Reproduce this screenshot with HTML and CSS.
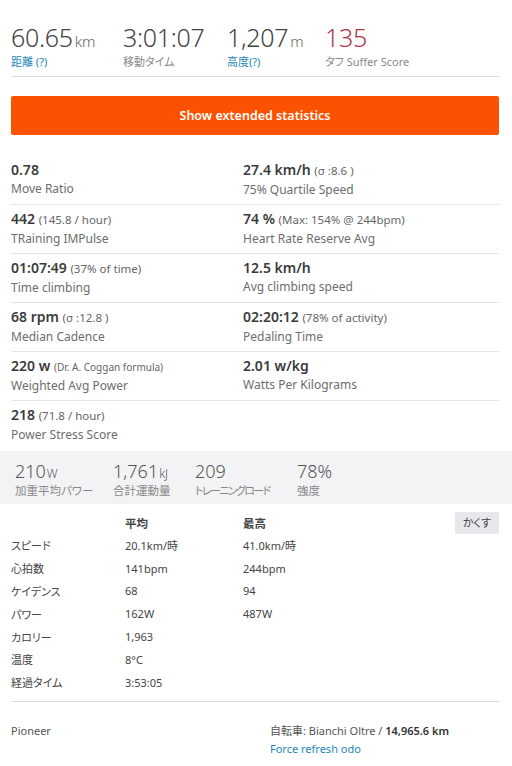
FILE: index.html
```html
<!DOCTYPE html>
<html lang="ja">
<head>
    <meta charset="UTF-8">
    <meta name="viewport" content="width=device-width, initial-scale=1.0">
    <title>Activity</title>
    <link rel="stylesheet" href="styles.css">
</head>
<body>
    <div class="page">
        <ul class="summary">
            <li class="summary-item">
                <div class="big">60.65<span class="unit">km</span></div>
                <div class="small link">距離 (?)</div>
            </li>
            <li class="summary-item">
                <div class="big">3:01:07</div>
                <div class="small">移動タイム</div>
            </li>
            <li class="summary-item">
                <div class="big">1,207<span class="unit">m</span></div>
                <div class="small link">高度(?)</div>
            </li>
            <li class="summary-item">
                <div class="big suffer">135</div>
                <div class="small">タフ Suffer Score</div>
            </li>
        </ul>

        <button class="extended-btn">Show extended statistics</button>

        <div class="ext-grid">
            <div class="ext-cell">
                <div class="ext-value">0.78</div>
                <div class="ext-label">Move Ratio</div>
            </div>
            <div class="ext-cell">
                <div class="ext-value">27.4 km/h <span class="ext-note">(σ :8.6 )</span></div>
                <div class="ext-label">75% Quartile Speed</div>
            </div>
            <div class="ext-cell">
                <div class="ext-value">442 <span class="ext-note">(145.8 / hour)</span></div>
                <div class="ext-label">TRaining IMPulse</div>
            </div>
            <div class="ext-cell">
                <div class="ext-value">74 % <span class="ext-note">(Max: 154% @ 244bpm)</span></div>
                <div class="ext-label">Heart Rate Reserve Avg</div>
            </div>
            <div class="ext-cell">
                <div class="ext-value">01:07:49 <span class="ext-note">(37% of time)</span></div>
                <div class="ext-label">Time climbing</div>
            </div>
            <div class="ext-cell">
                <div class="ext-value">12.5 km/h</div>
                <div class="ext-label">Avg climbing speed</div>
            </div>
            <div class="ext-cell">
                <div class="ext-value">68 rpm <span class="ext-note">(σ :12.8 )</span></div>
                <div class="ext-label">Median Cadence</div>
            </div>
            <div class="ext-cell">
                <div class="ext-value">02:20:12 <span class="ext-note">(78% of activity)</span></div>
                <div class="ext-label">Pedaling Time</div>
            </div>
            <div class="ext-cell">
                <div class="ext-value">220 w <span class="ext-note tiny">(Dr. A. Coggan formula)</span></div>
                <div class="ext-label">Weighted Avg Power</div>
            </div>
            <div class="ext-cell">
                <div class="ext-value">2.01 w/kg</div>
                <div class="ext-label">Watts Per Kilograms</div>
            </div>
            <div class="ext-cell last">
                <div class="ext-value">218 <span class="ext-note">(71.8 / hour)</span></div>
                <div class="ext-label">Power Stress Score</div>
            </div>
        </div>

        <ul class="secondary">
            <li>
                <div class="sec-value">210<span class="unit">W</span></div>
                <div class="sec-label">加重平均パワー</div>
            </li>
            <li>
                <div class="sec-value">1,761<span class="unit">kJ</span></div>
                <div class="sec-label">合計運動量</div>
            </li>
            <li>
                <div class="sec-value">209</div>
                <div class="sec-label narrow">トレーニングロード</div>
            </li>
            <li>
                <div class="sec-value">78%</div>
                <div class="sec-label">強度</div>
            </li>
        </ul>

        <div class="more-stats">
            <table class="avg-max">
                <thead>
                    <tr>
                        <th></th>
                        <th>平均</th>
                        <th>最高</th>
                        <th class="hide-col"><button class="hide-btn">かくす</button></th>
                    </tr>
                </thead>
                <tbody>
                    <tr><td>スピード</td><td>20.1km/時</td><td>41.0km/時</td><td></td></tr>
                    <tr><td>心拍数</td><td>141bpm</td><td>244bpm</td><td></td></tr>
                    <tr><td>ケイデンス</td><td>68</td><td>94</td><td></td></tr>
                    <tr><td>パワー</td><td>162W</td><td>487W</td><td></td></tr>
                    <tr><td>カロリー</td><td>1,963</td><td></td><td></td></tr>
                    <tr><td>温度</td><td>8°C</td><td></td><td></td></tr>
                    <tr><td>経過タイム</td><td>3:53:05</td><td></td><td></td></tr>
                </tbody>
            </table>
        </div>

        <div class="device">
            <div class="device-name">Pioneer</div>
            <div class="gear">
                <div>自転車: Bianchi Oltre / <strong>14,965.6 km</strong></div>
                <a class="refresh" href="#">Force refresh odo</a>
            </div>
        </div>
    </div>
</body>
</html>
```

FILE: styles.css
```css
body {
    margin: 0;
    background-color: #fff;
    font-family: "Noto Sans", "Noto Sans CJK JP", sans-serif;
    font-feature-settings: "palt";
    color: #333;
}

.page {
    padding: 0 13px 0 11px;
}

ul {
    list-style: none;
    margin: 0;
    padding: 0;
}

/* top summary */
.summary {
    display: flex;
    height: 54px;
    padding-top: 22px;
    border-bottom: 1px solid #ddd;
}

.summary-item:nth-child(1) { width: 112px; }
.summary-item:nth-child(2) { width: 104px; }
.summary-item:nth-child(3) { width: 98px; }

.big {
    height: 30px;
    font-size: 25px;
    font-weight: 300;
    line-height: 30px;
    color: #444;
    letter-spacing: -0.3px;
}

.big .unit {
    font-size: 15px;
    margin-left: 2px;
    color: #666;
    letter-spacing: 0;
}

.big.suffer {
    color: #b0374a;
}

.small {
    height: 14px;
    margin-top: 3px;
    font-size: 11px;
    line-height: 14px;
    color: #888;
}

.small.link {
    color: #1e88b4;
}

/* orange button */
.extended-btn {
    display: block;
    width: 100%;
    height: 39px;
    margin-top: 19px;
    border: none;
    border-radius: 2px;
    background-color: #fc5200;
    color: #fff;
    font-family: inherit;
    font-size: 12.5px;
    font-weight: 600;
    cursor: pointer;
}

/* extended stats */
.ext-grid {
    display: grid;
    grid-template-columns: 232px 1fr;
    margin-top: 21px;
}

.ext-cell {
    height: 49px;
    border-bottom: 1px solid #e4e4e4;
    padding-top: 5px;
    box-sizing: border-box;
}

.ext-cell.last {
    height: 50px;
    border-bottom: none;
}

.ext-value {
    font-size: 14px;
    font-weight: 600;
    line-height: 18px;
    color: #3b3b3b;
}

.ext-note {
    font-size: 11.5px;
    font-weight: 400;
    color: #666;
}

.ext-note.tiny {
    font-size: 10px;
}

.ext-label {
    font-size: 12px;
    line-height: 19px;
    color: #6d6d6d;
}

/* gray band */
.secondary {
    display: flex;
    height: 40px;
    margin: 0 -13px 0 -11px;
    padding: 8px 0 5px 15px;
    background-color: #f3f3f5;
}

.secondary li:nth-child(1) { width: 98px; }
.secondary li:nth-child(2) { width: 82px; }
.secondary li:nth-child(3) { width: 102px; }

.sec-value {
    height: 24px;
    font-size: 18px;
    font-weight: 300;
    line-height: 24px;
    color: #555;
}

.sec-value .unit {
    font-size: 12px;
    margin-left: 1px;
}

.sec-label {
    height: 16px;
    font-size: 11.5px;
    line-height: 16px;
    color: #888;
    white-space: nowrap;
}

.sec-label.narrow {
    font-size: 11px;
    letter-spacing: -1.6px;
}

/* avg / max table */
.more-stats {
    padding-top: 8px;
    padding-bottom: 7px;
    border-bottom: 1px solid #ddd;
}

.avg-max {
    width: 100%;
    border-collapse: collapse;
    font-size: 11px;
    color: #444;
}

.avg-max th {
    text-align: left;
    font-weight: 600;
    font-size: 11.5px;
    height: 22px;
    padding: 0;
    vertical-align: middle;
}

.avg-max td {
    height: 22.8px;
    padding: 0;
}

.avg-max th:first-child,
.avg-max td:first-child {
    width: 114px;
}

.avg-max th:nth-child(2),
.avg-max td:nth-child(2) {
    width: 118px;
}

.hide-btn {
    display: block;
    margin-left: auto;
    border: none;
    background-color: #e8e8ec;
    color: #444;
    font-family: inherit;
    font-feature-settings: "palt";
    font-size: 11px;
    line-height: 22px;
    padding: 0 8px;
    height: 22px;
    cursor: pointer;
}

/* device / gear */
.device {
    display: flex;
    padding-top: 20px;
    font-size: 11px;
    line-height: 18px;
    color: #555;
}

.device-name {
    width: 259px;
}

.gear strong {
    font-weight: 600;
    color: #333;
}

.refresh {
    color: #1e88b4;
    text-decoration: none;
}
```
